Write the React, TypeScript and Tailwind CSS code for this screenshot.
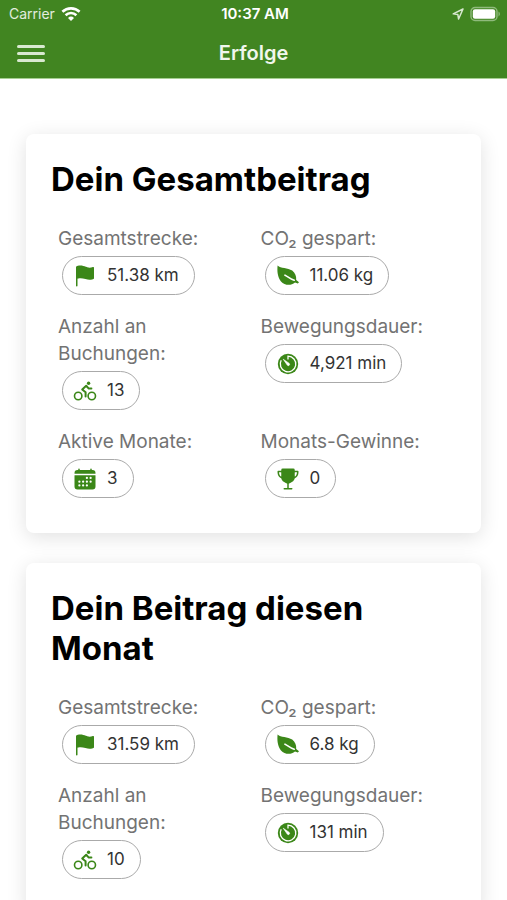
import type { ComponentType } from 'react'
import { IoCalendar, IoFlag, IoTrophy } from 'react-icons/io5'

interface IconProps {
  className?: string
}

interface Stat {
  label: string
  value: string
  icon: ComponentType<IconProps>
}

interface StatsCardProps {
  title: string
  stats: Stat[]
}

function LeafIcon({ className }: IconProps) {
  return (
    <svg className={className} viewBox="0 0 24 24" fill="currentColor">
      <path d="M1.6 1.4c3 3.2 10.2 1.8 14.6 5.2 3 2.4 4.3 5.6 4 9.4l2.8 2.2-1.2 1.3-2.8-1C15 22 8.6 21.6 5 17.4 1.6 13.2 1 7 1.6 1.4z" />
      <path d="M9 11.2c2.4 1 4.6 3.6 9.2 5" fill="none" stroke="#fff" strokeWidth="1.6" strokeLinecap="round" />
    </svg>
  )
}

function TimerIcon({ className }: IconProps) {
  return (
    <svg className={className} viewBox="0 0 24 24" fill="none">
      <circle cx="12" cy="12" r="10.2" fill="currentColor" />
      <path d="M12 7.4V4.2a7.8 7.8 0 1 1-6.8 4" stroke="#fff" strokeWidth="1.3" />
      <path d="M7.2 7.2l5.8 4a1.3 1.3 0 1 1-1.8 1.8z" fill="#fff" stroke="#fff" strokeWidth="0.6" />
    </svg>
  )
}

function BicycleIcon({ className }: IconProps) {
  return (
    <svg className={className} viewBox="0 0 24 24" fill="none" stroke="currentColor" strokeLinecap="round" strokeLinejoin="round">
      <circle cx="5.2" cy="17" r="3.7" strokeWidth="1.6" />
      <circle cx="18.8" cy="17" r="3.7" strokeWidth="1.6" />
      <circle cx="15.6" cy="4.2" r="1.7" fill="currentColor" stroke="none" />
      <path d="M18.4 9.6h-2.6l-2.6-2.8-4 3.6 3.4 2.8v4.2" strokeWidth="2" />
    </svg>
  )
}

const totalStats: Stat[] = [
  { label: 'Gesamtstrecke:', value: '51.38 km', icon: IoFlag },
  { label: 'CO₂ gespart:', value: '11.06 kg', icon: LeafIcon },
  { label: 'Anzahl an Buchungen:', value: '13', icon: BicycleIcon },
  { label: 'Bewegungsdauer:', value: '4,921 min', icon: TimerIcon },
  { label: 'Aktive Monate:', value: '3', icon: IoCalendar },
  { label: 'Monats-Gewinne:', value: '0', icon: IoTrophy }
]

const monthStats: Stat[] = [
  { label: 'Gesamtstrecke:', value: '31.59 km', icon: IoFlag },
  { label: 'CO₂ gespart:', value: '6.8 kg', icon: LeafIcon },
  { label: 'Anzahl an Buchungen:', value: '10', icon: BicycleIcon },
  { label: 'Bewegungsdauer:', value: '131 min', icon: TimerIcon }
]

function StatusBar() {
  return (
    <div className="grid h-7 grid-cols-3 items-center pr-1.5 pl-[9px] text-white">
      <div className="flex items-center gap-1.5">
        <span className="text-sm text-white/85">Carrier</span>
        <svg className="h-3.5 w-5" viewBox="0 0 20 14" fill="none" stroke="currentColor" strokeWidth="2.6">
          <path d="M1.4 4.8a12.4 12.4 0 0 1 17.2 0" />
          <path d="M4.6 8.2a7.8 7.8 0 0 1 10.8 0" />
          <path d="M10 14l-3-3.1a4.3 4.3 0 0 1 6 0z" fill="currentColor" stroke="none" />
        </svg>
      </div>
      <span className="text-center text-[15px] font-semibold whitespace-nowrap">10:37 AM</span>
      <div className="flex items-center justify-end gap-1.5">
        <svg className="h-3 w-3" viewBox="0 0 12 12" fill="none" stroke="#d8e8d0" strokeWidth="1.5" strokeLinejoin="round">
          <path d="M11 1L1.2 5.8l4.6.6L6.6 11z" />
        </svg>
        <svg className="h-4 w-[31px]" viewBox="0 0 31 16" fill="none">
          <rect x="1" y="1.5" width="26" height="13" rx="4" stroke="#8fba7c" strokeWidth="1.4" />
          <rect x="2.8" y="3.3" width="22.4" height="9.4" rx="2.2" fill="#fff" />
          <path d="M28.5 5.6c1.8.7 1.8 4.1 0 4.8z" fill="#8fba7c" />
        </svg>
      </div>
    </div>
  )
}

function Header() {
  return (
    <header className="shrink-0 border-b border-[#a5cf91] bg-[#418521]">
      <StatusBar />
      <div className="grid h-[50px] grid-cols-3 items-center px-[17px]">
        <button type="button" aria-label="Menü" className="flex w-7 flex-col gap-1">
          <span className="h-[3px] rounded-full bg-[#d9e9d1]" />
          <span className="h-[3px] rounded-full bg-[#d9e9d1]" />
          <span className="h-[3px] rounded-full bg-[#d9e9d1]" />
        </button>
        <h1 className="text-center text-xl font-semibold text-[#f0f6ec]">Erfolge</h1>
      </div>
    </header>
  )
}

function StatItem({ label, value, icon: Icon }: Stat) {
  return (
    <div className="px-[7px]">
      <p className="text-[19px] leading-[27px] text-[#737373]">{label}</p>
      <div className="mt-1 ml-1 inline-flex h-[39px] items-center gap-2.5 rounded-full border border-[#aaaaaa] pr-[15px] pl-2.5">
        <Icon className="size-6 text-[#3b8718]" />
        <span className="text-[17px] text-[#333333]">{value}</span>
      </div>
    </div>
  )
}

function StatsCard({ title, stats }: StatsCardProps) {
  return (
    <section className="rounded-lg bg-white px-[25px] pt-[25px] pb-[35px] shadow-[0_4px_20px_rgba(0,0,0,0.12)]">
      <h2 className="text-[33px] leading-10 font-bold text-black">{title}</h2>
      <div className="mt-[26px] grid grid-cols-2 gap-y-[18px]">
        {stats.map((stat) => (
          <StatItem key={stat.label} {...stat} />
        ))}
      </div>
    </section>
  )
}

export default function App() {
  return (
    <div className="flex h-screen flex-col bg-white font-['Inter',sans-serif]">
      <Header />
      <main className="flex flex-1 flex-col gap-[30px] overflow-y-auto px-[26px] pt-[55px] pb-7 [scrollbar-width:none]">
        <StatsCard title="Dein Gesamtbeitrag" stats={totalStats} />
        <StatsCard title="Dein Beitrag diesen Monat" stats={monthStats} />
      </main>
    </div>
  )
}
